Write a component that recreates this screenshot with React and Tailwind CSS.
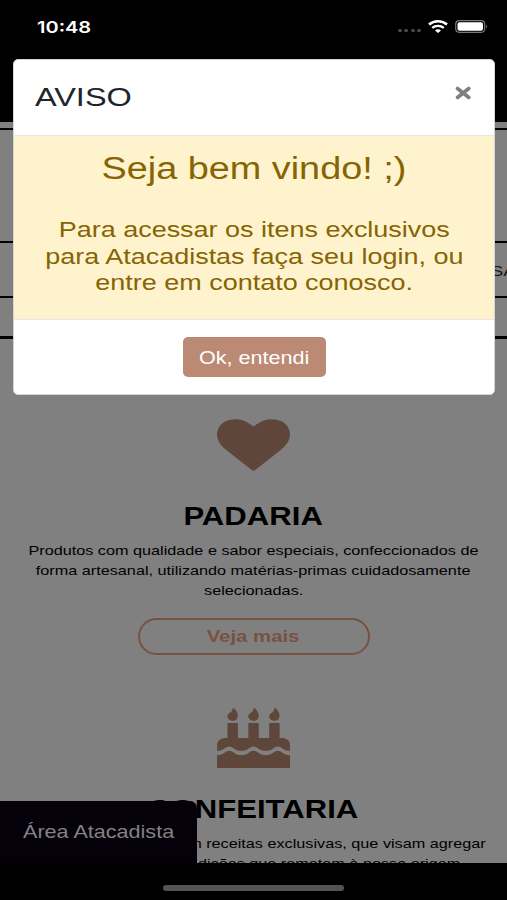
const CAKE_TOP =
  'M1792 1088v192q-45 0-85-14t-59-27.5-47-37.5q-30-27-51.5-38t-56.5-11-55.5 11-51.5 38q-28 24-47 37.5t-59 27.5-85 14-85-14-59-27.5-47-37.5q-30-27-51.5-38t-56.5-11-56.5 11-51.5 38q-28 24-47 37.5t-59 27.5-85 14-85-14-58-27.5-47-37.5q-30-27-51.5-38t-56.5-11-56.5 11-51.5 38q-28 24-47 37.5t-59 27.5-84 14v-192q0-80 56-136t136-56h64v-448h256v448h256v-448h256v448h256v-448h256v448h64q80 0 136 56t56 136z';
const CAKE_BASE =
  'M1792 1408v384h-1792v-384q45 0 85-14t59-27.5 47-37.5q30-27 51.5-38t56.5-11 55.5 11 52.5 38q29 25 47 38t58 27 86 14q45 0 85-14.5t58-27 48-37.5q21-19 32.5-27t31-15 43.5-7q35 0 56.5 11t51.5 38q28 24 47 37.5t59 27.5 85 14 85-14 59-27.5 47-37.5q30-27 51.5-38t56.5-11 55.5 11 51.5 38q28 24 47 37.5t59 27.5 85 14z';
const FLAME =
  'q0 77-36 118.5t-92 41.5q-53 0-90.5-37.5t-37.5-90.5q0-29 9.5-51t23.5-34 31-28 31-31.5 23.5-44.5 9.5-67q38 0 83 74t45 150z';

function Cake() {
  return (
    <svg viewBox="0 0 1792 1792" preserveAspectRatio="none" className="h-[60px] w-[73px] shrink-0 fill-[#5e463b]">
      <path d={CAKE_BASE} />
      <path d={CAKE_TOP} />
      <path d={'M512 224' + FLAME} />
      <path d={'M1024 224' + FLAME} />
      <path d={'M1536 224' + FLAME} />
    </svg>
  );
}

function Heart() {
  return (
    <svg viewBox="0 0 1792 1792" preserveAspectRatio="none" className="h-[60px] w-[73px] shrink-0 fill-[#5e463b]">
      <path d="M896 1664q-26 0-44-18l-624-602q-10-8-27.5-26t-55.5-65.5-68-97.5-53.5-121-23.5-138q0-220 127-344t351-124q62 0 126.5 21.5t120 58 95.5 68.5 76 68q36-36 76-68t95.5-68.5 120-58 126.5-21.5q224 0 351 124t127 344q0 221-229 450l-623 600q-18 18-44 18z" />
    </svg>
  );
}

function Line({ children, className = 'scale-x-[1.22]' }) {
  return <span className={'block w-max whitespace-nowrap ' + className}>{children}</span>;
}

function StatusBar() {
  return (
    <div className="absolute inset-x-0 top-0 flex h-[53px] items-center justify-between pr-[18px] pl-[37px] text-white">
      <span className="origin-left scale-x-[1.25] font-['Inter'] text-[16px] leading-[20px] font-semibold">10:48</span>
      <div className="flex items-center">
        <div className="mt-[7px] mr-[7px] flex gap-[2.5px]">
          <i className="h-[3px] w-[4px] rounded-full bg-[#4a4a4a]" />
          <i className="h-[3px] w-[4px] rounded-full bg-[#4a4a4a]" />
          <i className="h-[3px] w-[4px] rounded-full bg-[#4a4a4a]" />
          <i className="h-[3px] w-[4px] rounded-full bg-[#4a4a4a]" />
        </div>
        <svg viewBox="0 0 20 13" className="mr-[7px] h-[13px] w-[20px]" fill="none" stroke="#fff">
          <path d="M1 4.6C6 0.2 14 0.2 19 4.6" strokeWidth="2.6" />
          <path d="M4.2 7.9C7.5 5.2 12.5 5.2 15.800 7.900" strokeWidth="2.3" />
          <path d="M7 10.400Q10 8.200 13 10.400L10 12.900Z" fill="#fff" stroke="none" />
        </svg>
        <svg viewBox="0 0 34 13" className="h-[13px] w-[34px]">
          <rect x="0.700" y="0.700" width="29" height="11.600" rx="3.500" fill="none" stroke="#777" strokeWidth="1.200" />
          <rect x="2.500" y="2.200" width="25.500" height="8.600" rx="2" fill="#fff" />
          <path d="M31.200 4.500q2 2 0 4z" fill="#777" />
        </svg>
      </div>
    </div>
  );
}

function Section({ icon, title, lines }) {
  return (
    <section className="flex h-[293.2px] shrink-0 flex-col items-center text-black">
      {icon}
      <h2 className="mt-[25px] text-[25.5px] leading-[32px] font-bold">
        <Line>{title}</Line>
      </h2>
      <div className="mt-[9.5px] flex flex-col items-center text-[13.3px] leading-[20px]">
        {lines.map((l) => (
          <Line key={l}>{l}</Line>
        ))}
      </div>
      <div className="mt-[17px] flex h-[37px] w-[232px] shrink-0 items-center justify-center rounded-[22px] border-2 border-[#765241] text-[16.7px] font-bold text-[#765241]">
        <Line>Veja mais</Line>
      </div>
    </section>
  );
}

function Modal() {
  return (
    <div className="absolute top-[59px] left-[13px] flex h-[336px] w-[482px] flex-col overflow-hidden rounded-[5px] border border-[#d5d5d5] bg-white">
      <div className="flex h-[76px] items-center justify-between border-b border-[#e6e7e8] pr-[22px] pl-[21px] text-[#212529]">
        <Line className="mb-[2px] origin-left scale-x-[1.22] text-[26.6px] leading-[32px]">AVISO</Line>
        <svg viewBox="0 0 18 14" className="mb-[10px] h-[14px] w-[18px]" stroke="#7f7f7f" strokeWidth="3.6" strokeLinecap="round">
          <path d="M3.500 2.500L14.800 11.500M14.800 2.500L3.500 11.500" />
        </svg>
      </div>
      <div className="flex h-[183px] flex-col items-center bg-[#fff3cd] pt-[14px] text-[#856404]">
        <h3 className="text-[31px] leading-[37px]">
          <Line>Seja bem vindo! ;)</Line>
        </h3>
        <div className="mt-[30px] flex flex-col items-center text-[22.1px] leading-[26.6px]">
          <Line>Para acessar os itens exclusivos</Line>
          <Line>para Atacadistas faça seu login, ou</Line>
          <Line>entre em contato conosco.</Line>
        </div>
      </div>
      <div className="flex flex-1 items-center justify-center border-t border-[#e6e7e8]">
        <button className="flex h-[40px] w-[143px] items-center justify-center rounded-[5px] bg-[#bc8a74] pt-[2px] text-[17.7px] text-white">
          <Line>Ok, entendi</Line>
        </button>
      </div>
    </div>
  );
}

export default function App() {
  return (
    <div className="relative flex h-[900px] w-[507px] flex-col overflow-hidden bg-[#808080] font-['Liberation_Sans',Arial,sans-serif]">
      <div className="h-[121.500px] shrink-0 bg-black" />
      <div className="h-[6.500px] shrink-0" />
      <div className="h-[115px] shrink-0 border-y-2 border-black" />
      <div className="flex h-[55px] shrink-0 items-center border-b-2 border-black pt-[3px] pl-[491px] text-[15px] text-[#151515]">
        <Line className="origin-left scale-x-[1.22]">SA</Line>
      </div>
      <div className="h-[41px] shrink-0 border-b-3 border-black" />
      <div className="h-[75.5px] shrink-0" />
      <Section
        icon={<Heart />}
        title="PADARIA"
        lines={[
          'Produtos com qualidade e sabor especiais, confeccionados de',
          'forma artesanal, utilizando matérias-primas cuidadosamente',
          'selecionadas.',
        ]}
      />
      <Section
        icon={<Cake />}
        title="CONFEITARIA"
        lines={[
          'Produtos fabricados com receitas exclusivas, que visam agregar',
          'sabor, qualidade e tradições que remetem à nossa origem.',
        ]}
      />

      <div className="absolute inset-x-0 bottom-0 flex flex-col">
        <div className="flex h-[62px] w-[197px] items-center rounded-tr-[7px] bg-[#04010a] pt-[2px] pl-[23px] text-[17.7px] text-[#828282]">
          <Line className="origin-left scale-x-[1.22]">Área Atacadista</Line>
        </div>
        <div className="flex h-[37.500px] justify-center bg-black pt-[22.500px]">
          <div className="h-[6px] w-[181px] rounded-full bg-[#545454]" />
        </div>
      </div>

      <Modal />
      <StatusBar />
    </div>
  );
}
